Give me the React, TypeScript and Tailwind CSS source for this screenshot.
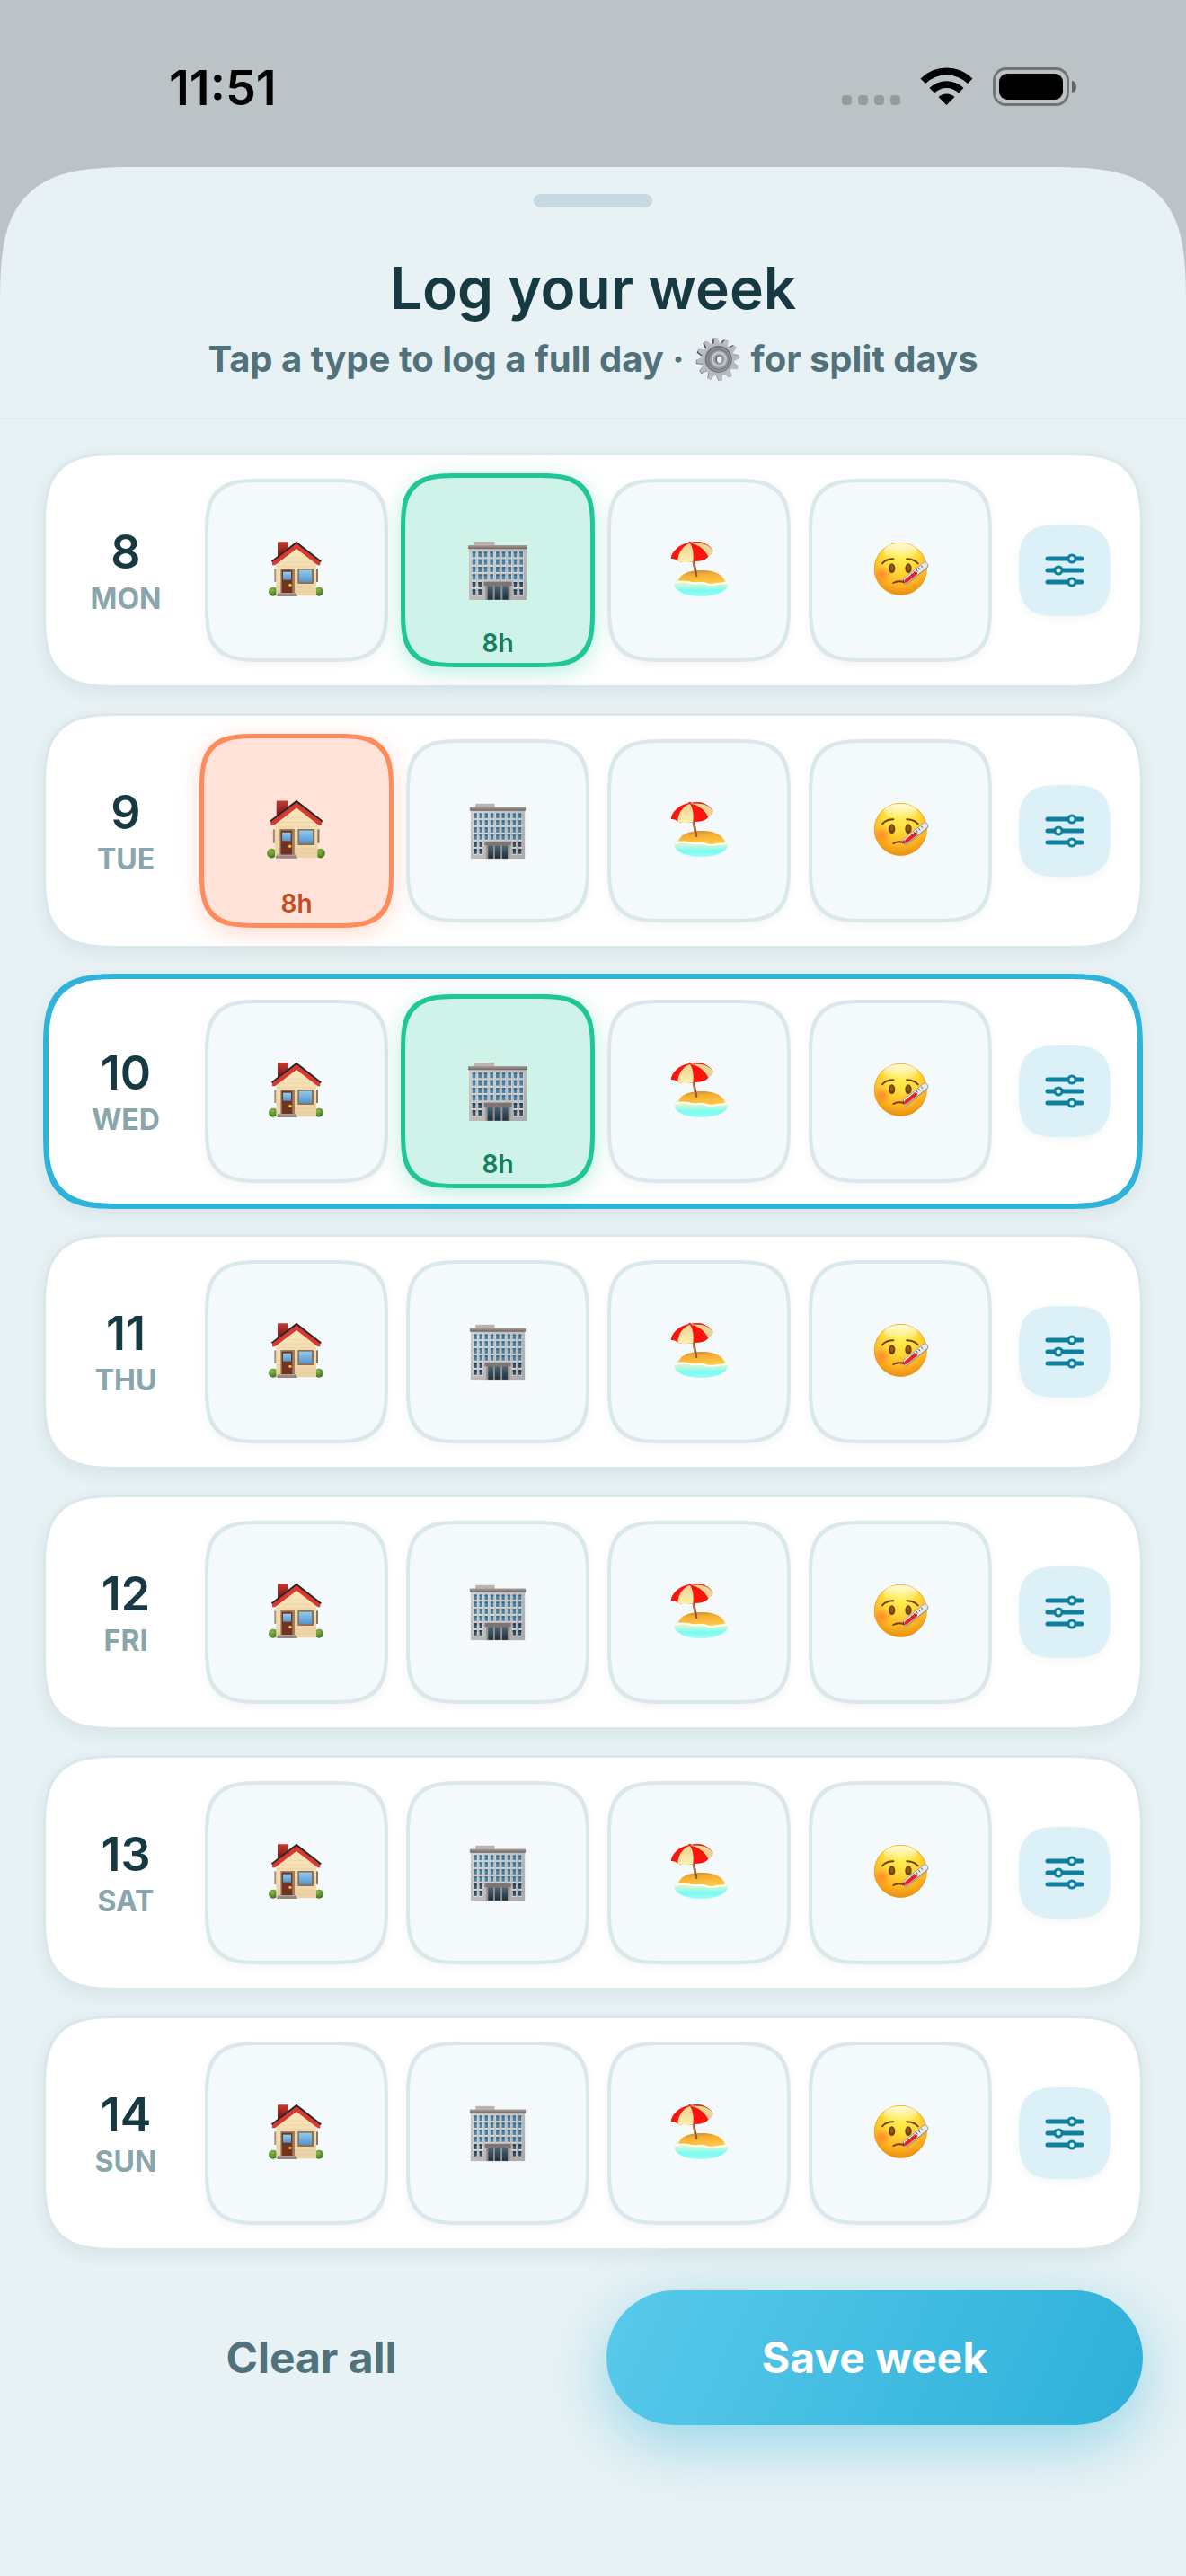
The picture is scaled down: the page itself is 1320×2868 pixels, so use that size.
import React, { useState } from 'react';
import clsx from 'clsx';

type EntryType = 'home' | 'office' | 'holiday' | 'sick';

interface Day {
  date: number;
  label: string;
  entry?: EntryType;
  isToday?: boolean;
}

const INITIAL_WEEK: Day[] = [
  { date: 8, label: 'MON', entry: 'office' },
  { date: 9, label: 'TUE', entry: 'home' },
  { date: 10, label: 'WED', entry: 'office', isToday: true },
  { date: 11, label: 'THU' },
  { date: 12, label: 'FRI' },
  { date: 13, label: 'SAT' },
  { date: 14, label: 'SUN' },
];

interface IconProps {
  className?: string;
}

const HouseIcon = ({ className }: IconProps) => (
  <svg viewBox="84 96 198 198" className={className} aria-hidden="true">
    <defs>
      <linearGradient id="house-wall" x1="0" y1="0" x2="0" y2="1">
        <stop offset="0" stopColor="#fbe8bd" />
        <stop offset="1" stopColor="#ead2a5" />
      </linearGradient>
      <linearGradient id="house-chimney" x1="0" y1="0" x2="0" y2="1">
        <stop offset="0" stopColor="#c23a31" />
        <stop offset="1" stopColor="#6e1512" />
      </linearGradient>
      <linearGradient id="house-glass" x1="0" y1="0" x2="0" y2="1">
        <stop offset="0" stopColor="#8fcbee" />
        <stop offset="1" stopColor="#5595cf" />
      </linearGradient>
      <radialGradient id="house-bush" cx="0.4" cy="0.3" r="0.7">
        <stop offset="0" stopColor="#8dba48" />
        <stop offset="1" stopColor="#3d7521" />
      </radialGradient>
    </defs>
    <ellipse cx="105" cy="266" rx="15" ry="15" fill="url(#house-bush)" />
    <ellipse cx="258" cy="266" rx="15" ry="15" fill="url(#house-bush)" />
    <rect x="109" y="190" width="7" height="44" fill="#a98c76" />
    <rect x="248" y="190" width="7" height="44" fill="#8d7462" />
    <rect x="120" y="100" width="35" height="50" rx="2" fill="url(#house-chimney)" />
    <path d="M115 168 L183 116 L249 168 V280 H115 Z" fill="url(#house-wall)" />
    <path d="M116 182h132M116 196h132M116 210h132M116 224h132M116 238h132M116 252h132M116 266h132M132 168h102M150 154h66" stroke="#dfc390" strokeWidth="1.5" opacity="0.7" />
    <path d="M183 98 L267 164 L258 172 L183 112 L108 172 L98 164 Z" fill="#25282b" />
    <path d="M183 106 L262 167 V178 H254 L183 123 L111 178 H102 V167 Z" fill="#d8382f" />
    <rect x="130" y="189" width="47" height="83" fill="#a27f63" />
    <rect x="134" y="194" width="35" height="78" fill="#70331f" />
    <rect x="138" y="200" width="27" height="27" fill="url(#house-glass)" />
    <circle cx="162" cy="244" r="5" fill="#f4bd3f" />
    <rect x="187" y="189" width="53" height="51" rx="2" fill="#8f6f55" />
    <rect x="192" y="194" width="42" height="40" fill="url(#house-glass)" />
    <path d="M121 271h61l4 11h-69z" fill="#96857f" />
    <path d="M121 272h61" stroke="#b9aaa3" strokeWidth="3" />
  </svg>
);

const WINDOW_COLUMNS = [78, 98, 117, 137, 157, 177, 197, 216, 236];
const WINDOW_ROWS = [133, 158, 183, 208, 234, 259];

const OfficeIcon = ({ className }: IconProps) => (
  <svg viewBox="58 90 210 210" className={className} aria-hidden="true">
    <defs>
      <linearGradient id="office-wall" x1="0" y1="0" x2="1" y2="1">
        <stop offset="0" stopColor="#d3cecc" />
        <stop offset="1" stopColor="#aaa8a9" />
      </linearGradient>
      <linearGradient id="office-roof" x1="0" y1="0" x2="0" y2="1">
        <stop offset="0" stopColor="#a9a19c" />
        <stop offset="1" stopColor="#6c6461" />
      </linearGradient>
      <linearGradient id="office-door" x1="0" y1="0" x2="0" y2="1">
        <stop offset="0" stopColor="#4d6574" />
        <stop offset="1" stopColor="#1b2e3c" />
      </linearGradient>
    </defs>
    <rect x="84" y="99" width="68" height="14" fill="#bdb2ae" />
    <rect x="67" y="118" width="192" height="176" fill="url(#office-wall)" />
    <rect x="64" y="111" width="198" height="13" rx="2" fill="url(#office-roof)" />
    {WINDOW_ROWS.map((y, row) =>
      WINDOW_COLUMNS.map((x, col) =>
        row > 3 && col > 1 && col < 7 ? null : (
          <g key={`${x}-${y}`}>
            <rect x={x - 2} y={y - 2} width="15" height="23" fill="#dedad8" />
            <rect x={x} y={y} width="11" height="18" fill={row > 3 ? '#31506a' : '#4781a3'} />
            <rect x={x} y={y} width="11" height="5" fill={row > 3 ? '#23394c' : '#356c8e'} />
          </g>
        ),
      ),
    )}
    <rect x="122" y="236" width="84" height="58" fill="#97918f" />
    <rect x="117" y="233" width="93" height="14" rx="2" fill="#7c7472" />
    <rect x="129" y="247" width="18" height="46" fill="url(#office-door)" />
    <rect x="153" y="247" width="20" height="46" fill="url(#office-door)" />
    <rect x="179" y="247" width="19" height="46" fill="url(#office-door)" />
  </svg>
);

const BeachIcon = ({ className }: IconProps) => (
  <svg viewBox="48 66 198 198" className={className} aria-hidden="true">
    <defs>
      <linearGradient id="beach-sea" x1="0" y1="0" x2="0" y2="1">
        <stop offset="0" stopColor="#e6f0c0" />
        <stop offset="0.45" stopColor="#dcf6d4" />
        <stop offset="0.75" stopColor="#78fbf2" />
        <stop offset="1" stopColor="#a0fbf6" />
      </linearGradient>
      <linearGradient id="beach-sand" x1="0" y1="0" x2="0.2" y2="1">
        <stop offset="0" stopColor="#b98440" />
        <stop offset="0.35" stopColor="#f6ad2e" />
        <stop offset="1" stopColor="#fdc94a" />
      </linearGradient>
      <linearGradient id="beach-cream" x1="0" y1="0" x2="0" y2="1">
        <stop offset="0" stopColor="#ecd08f" />
        <stop offset="1" stopColor="#fff2b0" />
      </linearGradient>
    </defs>
    <ellipse cx="154" cy="213" rx="89" ry="39" fill="url(#beach-sea)" />
    <path d="M80 203 C78 180 112 165 152 165 C200 164 234 182 233 207 C218 212 212 207 196 211 C176 214 168 202 146 206 C124 210 110 198 80 203 Z" fill="url(#beach-sand)" />
    <path d="M70 206 C90 200 104 202 118 206 C134 211 146 205 162 207 C178 214 194 214 206 210 C218 206 230 212 238 206" fill="none" stroke="#fffdf0" strokeWidth="6" strokeLinecap="round" />
    <path d="M128 132 L138 182" stroke="#8a5430" strokeWidth="8" strokeLinecap="round" />
    <path d="M126 132 L136 182" stroke="#c1824e" strokeWidth="3" />
    <path d="M117 72 C144 64 178 72 194 99 C190 108 184 113 178 119 C167 135 143 134 127 135 C105 140 86 139 76 134 C66 124 59 128 53 125 C57 98 86 75 117 72 Z" fill="#f9150d" />
    <path d="M117 74 C92 84 76 108 76 134 C90 141 112 138 127 135 C130 112 127 90 117 74 Z" fill="url(#beach-cream)" />
    <path d="M117 74 C140 76 166 93 178 119 C186 113 191 107 194 99 C179 76 148 70 117 74 Z" fill="#ead596" />
    <path d="M128 72 C148 67 162 72 170 78 C155 75 141 73 128 74 Z" fill="#d9261b" />
    <circle cx="116" cy="72" r="4" fill="#d3281e" />
  </svg>
);

const SickIcon = ({ className }: IconProps) => (
  <svg viewBox="60 66 198 198" className={className} aria-hidden="true">
    <defs>
      <radialGradient id="sick-face" cx="0.5" cy="0.22" r="0.8">
        <stop offset="0" stopColor="#fff45c" />
        <stop offset="0.4" stopColor="#ffdc3c" />
        <stop offset="0.75" stopColor="#fdb01f" />
        <stop offset="1" stopColor="#e58b12" />
      </radialGradient>
      <radialGradient id="sick-cheek">
        <stop offset="0" stopColor="#ff7a2c" stopOpacity="0.75" />
        <stop offset="1" stopColor="#ff7a2c" stopOpacity="0" />
      </radialGradient>
      <linearGradient id="sick-shine" x1="0" y1="0" x2="0" y2="1">
        <stop offset="0" stopColor="#ffffff" stopOpacity="0.85" />
        <stop offset="1" stopColor="#ffffff" stopOpacity="0" />
      </linearGradient>
    </defs>
    <circle cx="160" cy="160" r="88" fill="url(#sick-face)" />
    <circle cx="160" cy="160" r="87" fill="none" stroke="#e99a17" strokeWidth="2" />
    <ellipse cx="160" cy="100" rx="56" ry="25" fill="url(#sick-shine)" />
    <circle cx="98" cy="179" r="30" fill="url(#sick-cheek)" />
    <path d="M99 142 Q112 127 136 127M181 127 Q205 127 218 142" fill="none" stroke="#74410b" strokeWidth="6" strokeLinecap="round" />
    <ellipse cx="131" cy="158" rx="11" ry="16" fill="#74410b" />
    <ellipse cx="186" cy="158" rx="11" ry="16" fill="#74410b" />
    <ellipse cx="131" cy="156" rx="5" ry="9" fill="#945b13" />
    <ellipse cx="186" cy="156" rx="5" ry="9" fill="#945b13" />
    <path d="M136 207 Q152 198 172 205" fill="none" stroke="#74410b" strokeWidth="6" strokeLinecap="round" />
    <path d="M178 200 L241 149" stroke="#8c9299" strokeWidth="23" strokeLinecap="round" />
    <path d="M178 199 L241 148" stroke="#e6e8ea" strokeWidth="18" strokeLinecap="round" />
    <path d="M169 195 L176 208 L166 206 Z" fill="#a92320" />
    <path d="M179 200 L210 175" stroke="#ec2322" strokeWidth="12" strokeLinecap="round" />
    <path d="M196 176 l5 7M204 169 l5 7M212 162 l5 7M220 156 l5 7M229 149 l4 6" stroke="#42464b" strokeWidth="3" />
  </svg>
);

const GEAR_TEETH = [0, 30, 60, 90, 120, 150, 180, 210, 240, 270, 300, 330];

const GearIcon = ({ className }: IconProps) => (
  <svg viewBox="95 46 150 150" className={className} aria-hidden="true">
    <g fill="#5a4a45">
      {GEAR_TEETH.map((angle) => (
        <path key={angle} d="M158 70 L162 49 H174 L180 70 Z" transform={`rotate(${angle - 5} 168 121) translate(-3 1)`} />
      ))}
    </g>
    <g fill="#b9bdc7">
      {GEAR_TEETH.map((angle) => (
        <path key={angle} d="M160 72 L164 50 Q170 46 176 50 L182 72 Z" transform={`rotate(${angle - 5} 171 121)`} />
      ))}
    </g>
    <circle cx="171" cy="121" r="55" fill="#b4b8c1" />
    <circle cx="172" cy="121" r="45" fill="#70757c" />
    <circle cx="173" cy="122" r="40" fill="#92979e" />
    <circle cx="173" cy="122" r="34" fill="none" stroke="#757a82" strokeWidth="4" />
    <circle cx="174" cy="121" r="26" fill="#c4c7cf" />
    <circle cx="174" cy="121" r="19" fill="#9da1ab" />
    <ellipse cx="173" cy="121" rx="11" ry="13" fill="#6c655f" />
    <ellipse cx="175" cy="122" rx="8" ry="11" fill="#e8f2f5" />
  </svg>
);

const SlidersIcon = ({ className }: IconProps) => (
  <svg viewBox="0 0 48 48" className={className} fill="none" stroke="#0f7f9f" aria-hidden="true">
    <path d="M5 11h38M5 24h38M5 37h38" strokeWidth="5" strokeLinecap="round" />
    <g fill="#dcf0f8" strokeWidth="3">
      <circle cx="32" cy="11" r="4" />
      <circle cx="17" cy="24" r="4" />
      <circle cx="32" cy="37" r="4" />
    </g>
  </svg>
);

const StatusIcons = () => (
  <svg viewBox="0 0 264 48" className="h-12 w-[264px]" aria-hidden="true">
    <g fill="#969b9e">
      <rect x="1" y="34" width="11" height="11" rx="4" />
      <rect x="19" y="34" width="11" height="11" rx="4" />
      <rect x="37" y="34" width="11" height="11" rx="4" />
      <rect x="55" y="34" width="11" height="11" rx="4" />
    </g>
    <path d="M88.500 15.500 A41 41 0 0 1 146.500 15.500 L141 21 A34 34 0 0 0 94 21 Z" />
    <path d="M98.500 26 A27 27 0 0 1 136.500 26 L131 31.500 A19.500 19.500 0 0 0 104 31.500 Z" />
    <path d="M108.500 36 A13 13 0 0 1 126.500 36 L117.500 45 Z" />
    <rect x="170.500" y="4.500" width="82" height="40" rx="13" fill="none" stroke="#707577" strokeWidth="3" />
    <rect x="176" y="10" width="71" height="29" rx="9" />
    <path d="M257 18 A5 6.500 0 0 1 257 31 Z" fill="#5e6365" />
  </svg>
);

const ENTRY_TYPES = [
  { id: 'home' as const, name: 'Home', Icon: HouseIcon, active: 'border-[#ff8a5c] bg-[#ffe3d8] shadow-[0_6px_24px_rgba(255,138,92,0.3)]', text: 'text-[#c84b20]' },
  { id: 'office' as const, name: 'Office', Icon: OfficeIcon, active: 'border-[#1fc797] bg-[#d0f3e9] shadow-[0_6px_24px_rgba(31,199,151,0.3)]', text: 'text-[#15805f]' },
  { id: 'holiday' as const, name: 'Holiday', Icon: BeachIcon, active: 'border-[#f5b63c] bg-[#fff1d2]', text: 'text-[#946200]' },
  { id: 'sick' as const, name: 'Sick', Icon: SickIcon, active: 'border-[#e0607e] bg-[#fde0e7]', text: 'text-[#a52848]' },
];

interface DayRowProps {
  day: Day;
  onSelect: (entry: EntryType) => void;
}

const DayRow = ({ day, onSelect }: DayRowProps) => (
  <li
    className={clsx(
      'flex items-center rounded-[90px] bg-white shadow-[0_6px_18px_rgba(23,58,66,0.08)] [corner-shape:superellipse(1.7)]',
      day.isToday ? 'border-[6px] border-[#2fb3da] px-[30px] py-[23px]' : 'border-[3px] border-[#dbe8eb] px-[33px] py-[26px]',
    )}
  >
    <div className="mr-8 w-28 shrink-0 text-center">
      <div className="text-[52px] leading-[64px] font-semibold text-[#173a42]">{day.date}</div>
      <div className="text-[32px] leading-10 font-bold text-[#8aa6ad]">{day.label}</div>
    </div>

    <div className="grid flex-1 grid-cols-4 gap-5">
      {ENTRY_TYPES.map(({ id, name, Icon, active, text }) => {
        const selected = day.entry === id;
        return (
          <div key={id} className="grid aspect-square">
            <button
              type="button"
              aria-label={`${name}, ${day.label} ${day.date}`}
              aria-pressed={selected}
              onClick={() => onSelect(id)}
              className={clsx(
                'relative flex items-center justify-center rounded-[66px] [corner-shape:superellipse(1.7)]',
                selected ? ['-m-1.5 border-[5px]', active] : 'border-4 border-[#dbe8eb] bg-[#f4f9fc] shadow-[0_3px_10px_rgba(23,58,66,0.05)]',
              )}
            >
              <Icon className={selected ? 'size-[70px]' : 'size-[66px]'} />
              {selected && (
                <span className={clsx('absolute inset-x-0 bottom-1.5 text-[28px] leading-8 font-semibold', text)}>8h</span>
              )}
            </button>
          </div>
        );
      })}
    </div>

    <button
      type="button"
      aria-label={`Split ${day.label} ${day.date}`}
      className="ml-[30px] flex size-[102px] shrink-0 items-center justify-center rounded-[51px] bg-[#dcf0f8] shadow-[0_3px_10px_rgba(23,58,66,0.05)] [corner-shape:superellipse(1.7)]"
    >
      <SlidersIcon className="size-12" />
    </button>
  </li>
);

export default function App() {
  const [week, setWeek] = useState<Day[]>(INITIAL_WEEK);

  const selectEntry = (date: number, entry: EntryType) =>
    setWeek((days) => days.map((d) => (d.date === date ? { ...d, entry: d.entry === entry ? undefined : entry } : d)));

  const clearAll = () => setWeek((days) => days.map((d) => ({ ...d, entry: undefined })));

  return (
    <div className="flex min-h-screen flex-col bg-[#bbc3c6] font-['Inter','Liberation_Sans',sans-serif]">
      {/* Status bar */}
      <div className="flex h-[186px] items-center justify-between pr-[120px] pl-[188px]">
        <span className="pt-2.5 text-[54px] leading-[64px] font-semibold text-black">11:51</span>
        <div className="pt-1.5">
          <StatusIcons />
        </div>
      </div>

      {/* Sheet */}
      <main className="flex-1 rounded-t-[160px] bg-[#e8f2f5] [corner-shape:superellipse(1.7)]">
        <header className="border-b border-[#dbe8eb] pt-[30px] pb-[43px] text-center">
          <div className="mx-auto h-[15px] w-[132px] rounded-full bg-[#c6dbe1]" />
          <h1 className="mt-[50px] text-[64px] leading-[80px] font-semibold text-[#173a42]">Log your week</h1>
          <p className="mt-4 flex items-center justify-center gap-3 text-[40px] leading-[46px] font-bold text-[#52727b]">
            <span>Tap a type to log a full day ·</span>
            <GearIcon className="-my-1 size-[50px]" />
            <span>for split days</span>
          </p>
        </header>

        <ul className="flex flex-col gap-7 px-12 pt-[37px]">
          {week.map((day) => (
            <DayRow key={day.date} day={day} onSelect={(entry) => selectEntry(day.date, entry)} />
          ))}
        </ul>

        <footer className="mt-11 grid grid-cols-2 gap-[30px] px-12">
          <button type="button" onClick={clearAll} className="h-[150px] text-[48px] font-bold text-[#52727b]">
            Clear all
          </button>
          <button
            type="button"
            className="h-[150px] rounded-full bg-linear-[115deg] from-[#59caeb] to-[#2db0d9] text-[48px] font-bold text-white shadow-[0_20px_68px_rgba(47,179,218,0.45)]"
          >
            Save week
          </button>
        </footer>
      </main>
    </div>
  );
}
